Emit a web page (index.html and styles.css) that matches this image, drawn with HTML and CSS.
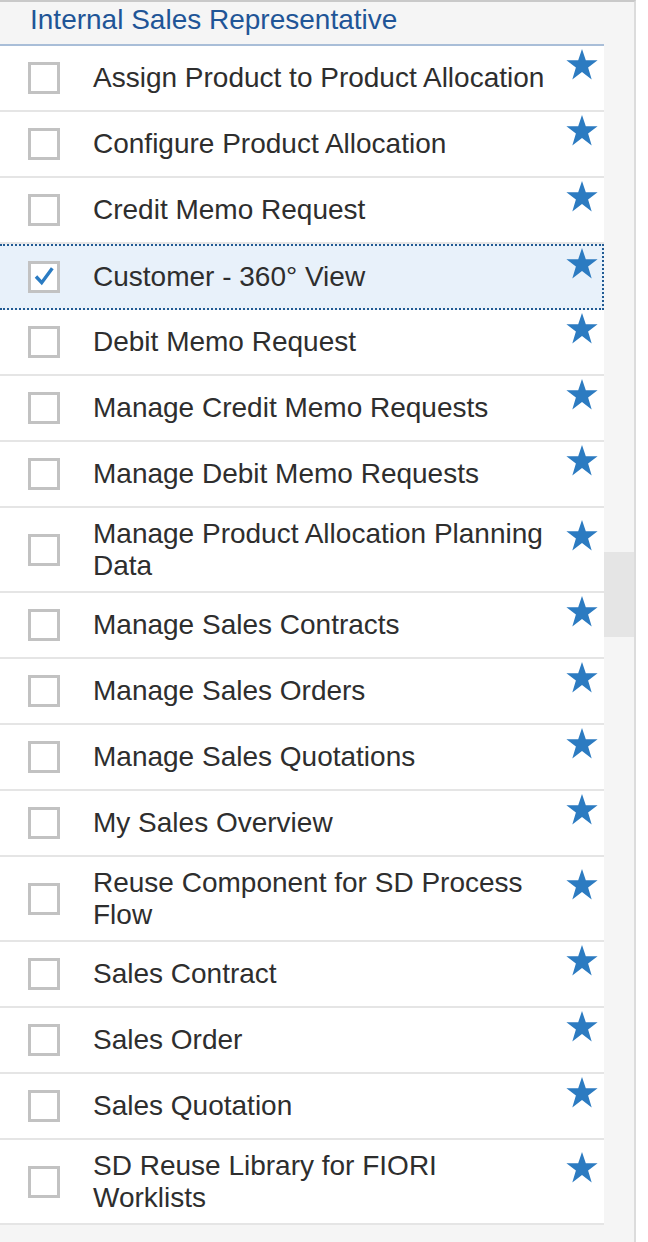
FILE: index.html
```html
<!DOCTYPE html>
<html>
<head>
<meta charset="utf-8">
<link rel="stylesheet" href="styles.css">
</head>
<body>
<div class="panel">
  <div class="list">
    <div class="group-header">Internal Sales Representative</div>
    <div class="row"><span class="cb"></span><span class="label">Assign Product to Product Allocation</span><svg class="star" viewBox="0 0 32 31"><polygon points="16,0 19.8,11.3 31.6,11.3 22.1,18.4 25.7,30.5 16,23 6.3,30.5 9.9,18.4 0.4,11.3 12.2,11.3"/></svg></div>
    <div class="row"><span class="cb"></span><span class="label">Configure Product Allocation</span><svg class="star" viewBox="0 0 32 31"><polygon points="16,0 19.8,11.3 31.6,11.3 22.1,18.4 25.7,30.5 16,23 6.3,30.5 9.9,18.4 0.4,11.3 12.2,11.3"/></svg></div>
    <div class="row"><span class="cb"></span><span class="label">Credit Memo Request</span><svg class="star" viewBox="0 0 32 31"><polygon points="16,0 19.8,11.3 31.6,11.3 22.1,18.4 25.7,30.5 16,23 6.3,30.5 9.9,18.4 0.4,11.3 12.2,11.3"/></svg></div>
    <div class="row selected"><span class="cb"><svg class="tick" viewBox="0 0 26 26"><polyline points="5,12.5 10.7,18.7 21.3,4.3"/></svg></span><span class="label">Customer - 360° View</span><svg class="star" viewBox="0 0 32 31"><polygon points="16,0 19.8,11.3 31.6,11.3 22.1,18.4 25.7,30.5 16,23 6.3,30.5 9.9,18.4 0.4,11.3 12.2,11.3"/></svg></div>
    <div class="row"><span class="cb"></span><span class="label">Debit Memo Request</span><svg class="star" viewBox="0 0 32 31"><polygon points="16,0 19.8,11.3 31.6,11.3 22.1,18.4 25.7,30.5 16,23 6.3,30.5 9.9,18.4 0.4,11.3 12.2,11.3"/></svg></div>
    <div class="row"><span class="cb"></span><span class="label">Manage Credit Memo Requests</span><svg class="star" viewBox="0 0 32 31"><polygon points="16,0 19.8,11.3 31.6,11.3 22.1,18.4 25.7,30.5 16,23 6.3,30.5 9.9,18.4 0.4,11.3 12.2,11.3"/></svg></div>
    <div class="row"><span class="cb"></span><span class="label">Manage Debit Memo Requests</span><svg class="star" viewBox="0 0 32 31"><polygon points="16,0 19.8,11.3 31.6,11.3 22.1,18.4 25.7,30.5 16,23 6.3,30.5 9.9,18.4 0.4,11.3 12.2,11.3"/></svg></div>
    <div class="row"><span class="cb"></span><span class="label">Manage Product Allocation Planning Data</span><svg class="star" viewBox="0 0 32 31"><polygon points="16,0 19.8,11.3 31.6,11.3 22.1,18.4 25.7,30.5 16,23 6.3,30.5 9.9,18.4 0.4,11.3 12.2,11.3"/></svg></div>
    <div class="row"><span class="cb"></span><span class="label">Manage Sales Contracts</span><svg class="star" viewBox="0 0 32 31"><polygon points="16,0 19.8,11.3 31.6,11.3 22.1,18.4 25.7,30.5 16,23 6.3,30.5 9.9,18.4 0.4,11.3 12.2,11.3"/></svg></div>
    <div class="row"><span class="cb"></span><span class="label">Manage Sales Orders</span><svg class="star" viewBox="0 0 32 31"><polygon points="16,0 19.8,11.3 31.6,11.3 22.1,18.4 25.7,30.5 16,23 6.3,30.5 9.9,18.4 0.4,11.3 12.2,11.3"/></svg></div>
    <div class="row"><span class="cb"></span><span class="label">Manage Sales Quotations</span><svg class="star" viewBox="0 0 32 31"><polygon points="16,0 19.8,11.3 31.6,11.3 22.1,18.4 25.7,30.5 16,23 6.3,30.5 9.9,18.4 0.4,11.3 12.2,11.3"/></svg></div>
    <div class="row"><span class="cb"></span><span class="label">My Sales Overview</span><svg class="star" viewBox="0 0 32 31"><polygon points="16,0 19.8,11.3 31.6,11.3 22.1,18.4 25.7,30.5 16,23 6.3,30.5 9.9,18.4 0.4,11.3 12.2,11.3"/></svg></div>
    <div class="row"><span class="cb"></span><span class="label">Reuse Component for SD Process Flow</span><svg class="star" viewBox="0 0 32 31"><polygon points="16,0 19.8,11.3 31.6,11.3 22.1,18.4 25.7,30.5 16,23 6.3,30.5 9.9,18.4 0.4,11.3 12.2,11.3"/></svg></div>
    <div class="row"><span class="cb"></span><span class="label">Sales Contract</span><svg class="star" viewBox="0 0 32 31"><polygon points="16,0 19.8,11.3 31.6,11.3 22.1,18.4 25.7,30.5 16,23 6.3,30.5 9.9,18.4 0.4,11.3 12.2,11.3"/></svg></div>
    <div class="row"><span class="cb"></span><span class="label">Sales Order</span><svg class="star" viewBox="0 0 32 31"><polygon points="16,0 19.8,11.3 31.6,11.3 22.1,18.4 25.7,30.5 16,23 6.3,30.5 9.9,18.4 0.4,11.3 12.2,11.3"/></svg></div>
    <div class="row"><span class="cb"></span><span class="label">Sales Quotation</span><svg class="star" viewBox="0 0 32 31"><polygon points="16,0 19.8,11.3 31.6,11.3 22.1,18.4 25.7,30.5 16,23 6.3,30.5 9.9,18.4 0.4,11.3 12.2,11.3"/></svg></div>
    <div class="row"><span class="cb"></span><span class="label">SD Reuse Library for FIORI Worklists</span><svg class="star" viewBox="0 0 32 31"><polygon points="16,0 19.8,11.3 31.6,11.3 22.1,18.4 25.7,30.5 16,23 6.3,30.5 9.9,18.4 0.4,11.3 12.2,11.3"/></svg></div>
    <div class="group-header next">Inventory Analyst Overview</div>
  </div>
  <div class="scrollbar"><div class="thumb"></div></div>
</div>
</body>
</html>
```

FILE: styles.css
```css
html, body {
  margin: 0;
  padding: 0;
  background: #ffffff;
}

body {
  font-family: "Liberation Sans", Arial, Helvetica, sans-serif;
  color: #333333;
  height: 1242px;
  overflow: hidden;
}

.panel {
  display: flex;
  width: 634px;
  height: 1240px;
  background: #f5f5f5;
  border-top: 2px solid #c9c9c9;
  border-right: 2px solid #dcdcdc;
  overflow: hidden;
}

.list {
  width: 604px;
  display: flex;
  flex-direction: column;
  flex: none;
}

.group-header {
  flex: none;
  font-size: 28px;
  line-height: 31px;
  color: #1f5597;
  padding: 2px 0 9px 30px;
  border-bottom: 2px solid #a9bed8;
  background: #f5f5f5;
}

.group-header.next {
  border-bottom: none;
  padding-top: 13px;
  color: #3f6ea5;
}

.row {
  flex: none;
  display: flex;
  align-items: center;
  background: #ffffff;
  border-bottom: 2px solid #e5e5e5;
  padding: 10px 0;
  min-height: 44px;
}

.row.selected {
  background: #e8f1fa;
  border-top: 2px dotted #215a92;
  border-right: 2px dotted #215a92;
  border-bottom: 2px dotted #215a92;
  padding: 9px 0;
}

.cb {
  flex: none;
  width: 26px;
  height: 26px;
  border: 3px solid #c2c2c2;
  background: #ffffff;
  margin-left: 28px;
  margin-right: 33px;
  display: flex;
}

.tick {
  width: 26px;
  height: 26px;
  fill: none;
  stroke: #2a7bc2;
  stroke-width: 3.4;
  stroke-linecap: butt;
  stroke-linejoin: miter;
}

.label {
  flex: 1;
  font-size: 28px;
  line-height: 31.5px;
  color: #2e2e2e;
}

.star {
  flex: none;
  width: 32px;
  height: 31px;
  fill: #2c7bc1;
  margin: 0 6px 0 10px;
  transform: translateY(-14px);
}

.row.selected .star {
  margin-right: 4px;
}

.scrollbar {
  width: 30px;
  flex: none;
  display: flex;
  flex-direction: column;
}

.thumb {
  margin-top: 550px;
  height: 85px;
  background: #e5e5e5;
}
```
